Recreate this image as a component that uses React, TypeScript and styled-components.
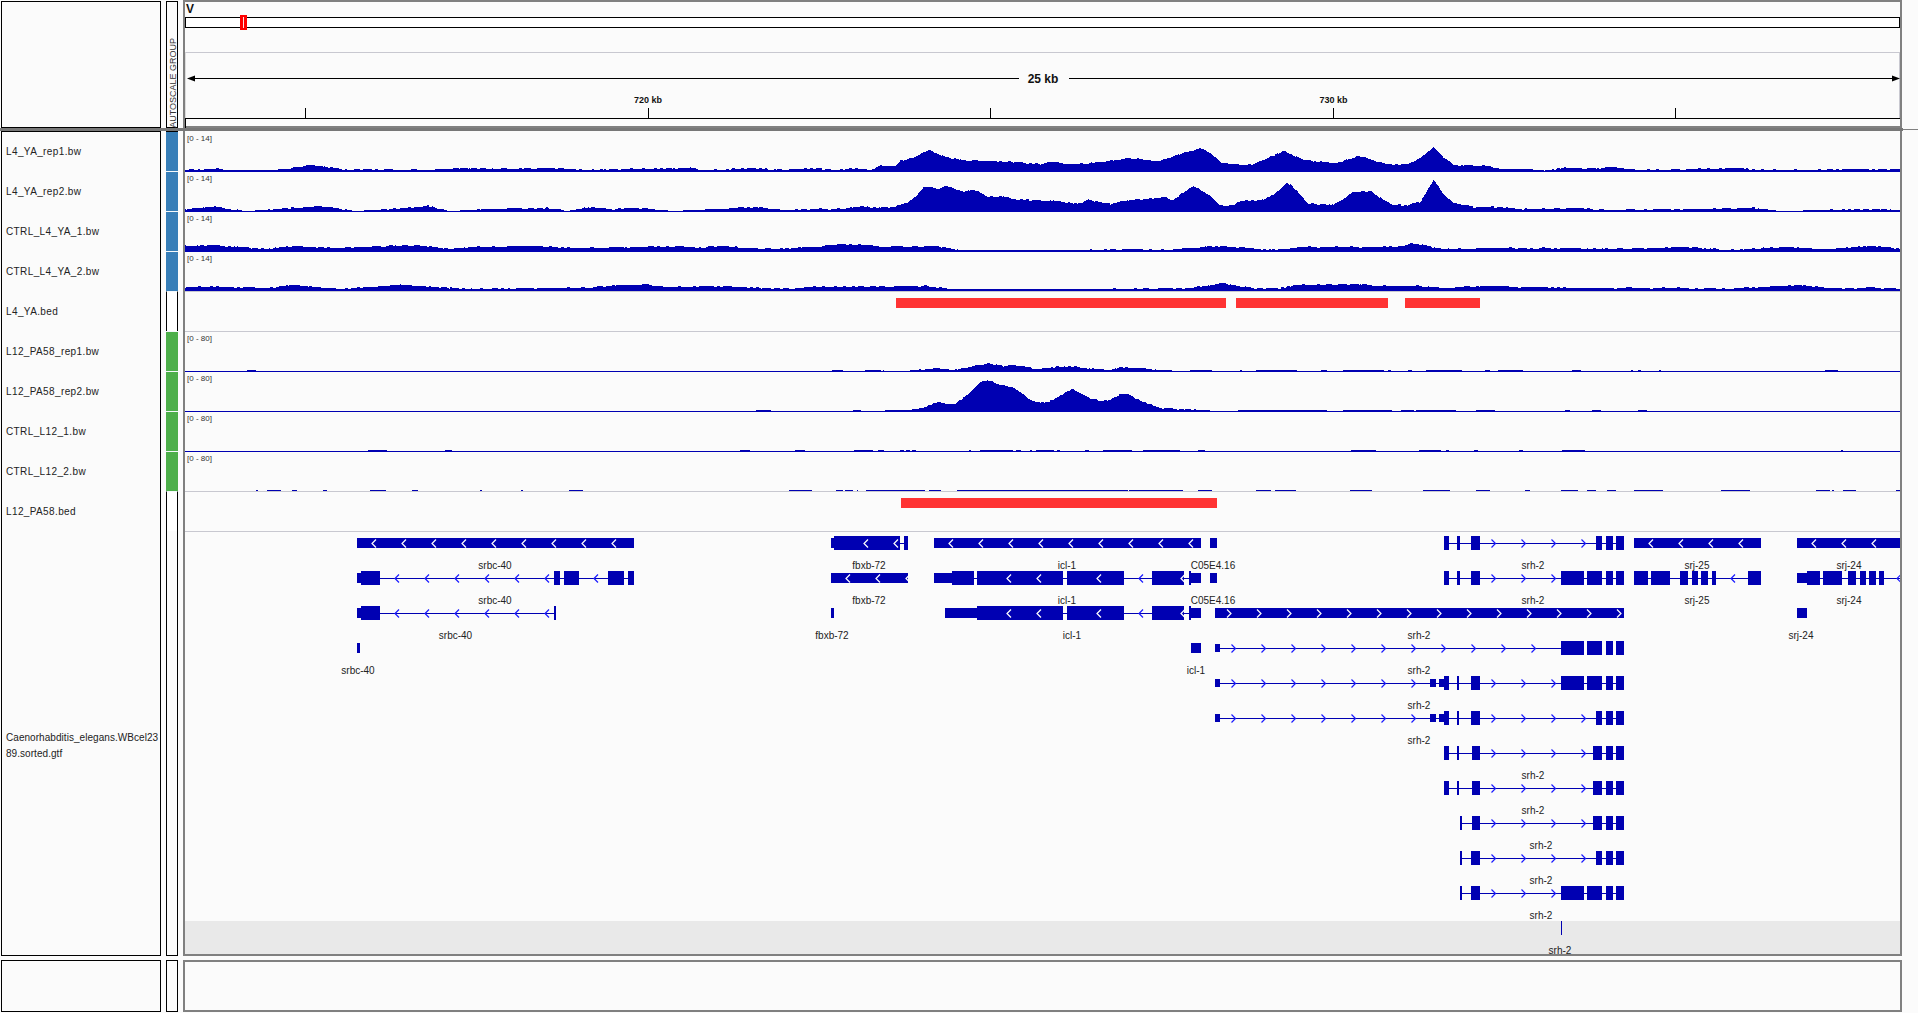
import styled, { createGlobalStyle } from "styled-components"

type Point = [number, number]
type Span = [number, number]

const BLUE = "#0000b2"
const RULE = "#c8c8d0"
const PANEL = "#fbfbfb"

// blip positions were read off crops at 2.45x, keep them in that scale
const crop = (offset: number, pairs: Span[]): Span[] =>
  pairs.map(([a, b]) => [offset + a / 2.45, offset + b / 2.45])

const noise = (x: number, seed: number) => {
  const bucket = Math.floor(x / 3)
  const v = Math.sin(bucket * 12.9898 + seed) * 43758.5453
  return v - Math.floor(v) - 0.5
}

const interpolate = (points: Point[], x: number) => {
  if (points.length === 0) return 0
  for (let i = 1; i < points.length; i++) {
    const [x0, h0] = points[i - 1]
    const [x1, h1] = points[i]
    if (x >= x0 && x <= x1) return h0 + ((h1 - h0) * (x - x0)) / (x1 - x0)
  }
  return 0
}

type TrackData = {
  name: string
  range?: string
  points?: Point[]
  floor?: number
  blips?: Span[]
  baseline?: boolean
  beds?: Span[]
  ruled?: boolean
  attr?: string
}

const coveragePath = (track: TrackData, seed: number, base: number) => {
  let d = `M185 ${base}`
  for (let x = 185; x < 1900; x++) {
    const raw = Math.max(interpolate(track.points ?? [], x), track.floor ?? 0)
    let h = raw > 2 ? Math.round(raw + noise(x, seed) * 1.3) : Math.round(raw)
    const inBlip = (track.blips ?? []).some(([a, b]) => x >= a && x < b)
    if (track.baseline) h = Math.max(h, inBlip ? 2 : 1)
    else if (inBlip) h = Math.max(h, 1)
    if (track.floor) h = Math.max(h, track.floor)
    d += `V${base - h}H${x + 1}`
  }
  return `${d}V${base}Z`
}

const TRACKS: TrackData[] = [
  {
    name: "L4_YA_rep1.bw",
    range: "[0 - 14]",
    attr: "#377eb8",
    points: [
      [184, 2], [190, 3], [200, 2], [214, 4], [228, 2], [277, 2], [312, 7], [347, 2], [367, 3], [428, 2],
      [469, 4], [510, 3], [551, 4], [584, 2], [612, 3], [640, 3], [689, 4], [709, 2], [754, 4], [783, 2],
      [811, 4], [832, 2], [856, 4], [869, 2], [880, 6], [894, 6], [900, 11], [913, 15], [929, 22], [937, 18],
      [950, 14], [963, 12], [1013, 10], [1040, 8], [1053, 10], [1073, 8], [1093, 9], [1128, 14], [1160, 11],
      [1180, 18], [1200, 24], [1210, 19], [1220, 9], [1230, 8], [1250, 7], [1263, 12], [1283, 21], [1297, 15],
      [1303, 12], [1320, 10], [1337, 9], [1357, 16], [1373, 12], [1387, 8], [1407, 8], [1420, 14], [1433, 25],
      [1443, 15], [1453, 7], [1487, 6], [1500, 3], [1551, 2], [1564, 5], [1584, 3], [1613, 5], [1637, 2],
      [1735, 4], [1760, 2], [1890, 3], [1902, 3],
    ],
  },
  {
    name: "L4_YA_rep2.bw",
    range: "[0 - 14]",
    attr: "#377eb8",
    points: [
      [184, 3], [216, 5], [245, 1], [265, 2], [318, 6], [355, 1], [388, 3], [428, 6], [449, 1], [490, 3],
      [547, 4], [567, 1], [588, 5], [612, 3], [640, 4], [673, 1], [693, 2], [754, 5], [783, 2], [820, 3],
      [844, 3], [860, 6], [880, 4], [893, 5], [907, 10], [917, 17], [923, 25], [932, 25], [938, 23], [945, 26],
      [953, 24], [963, 20], [970, 22], [978, 21], [987, 15], [1003, 16], [1017, 12], [1040, 12], [1063, 10],
      [1077, 8], [1088, 12], [1110, 8], [1123, 11], [1153, 14], [1163, 15], [1173, 12], [1183, 20], [1193, 26],
      [1208, 18], [1217, 9], [1223, 6], [1233, 7], [1240, 11], [1263, 12], [1277, 20], [1287, 30], [1297, 20],
      [1308, 8], [1327, 8], [1333, 7], [1343, 13], [1352, 20], [1370, 21], [1383, 12], [1393, 7], [1407, 7],
      [1420, 10], [1433, 32], [1443, 18], [1453, 9], [1473, 5], [1500, 5], [1523, 3], [1576, 4], [1604, 2],
      [1686, 3], [1755, 4], [1780, 1], [1870, 3], [1902, 2],
    ],
  },
  {
    name: "CTRL_L4_YA_1.bw",
    range: "[0 - 14]",
    attr: "#377eb8",
    floor: 2,
    points: [
      [184, 6], [212, 7], [265, 3], [294, 6], [335, 4], [367, 5], [416, 7], [449, 3], [469, 5], [531, 6],
      [571, 4], [640, 5], [681, 6], [701, 4], [713, 6], [775, 3], [852, 8], [885, 5], [934, 6], [958, 2],
      [1089, 2], [1130, 3], [1166, 2], [1220, 6], [1277, 2], [1302, 5], [1360, 5], [1400, 6], [1413, 9],
      [1441, 3], [1490, 4], [1564, 4], [1625, 3], [1686, 5], [1727, 2], [1784, 5], [1821, 3], [1874, 6],
      [1902, 3],
    ],
  },
  {
    name: "CTRL_L4_YA_2.bw",
    range: "[0 - 14]",
    attr: "#377eb8",
    ruled: true,
    floor: 2,
    points: [
      [184, 4], [240, 4], [265, 3], [298, 6], [339, 2], [400, 6], [449, 3], [486, 2], [531, 3], [571, 3],
      [612, 5], [640, 7], [665, 4], [722, 5], [762, 3], [791, 2], [811, 4], [926, 5], [954, 2], [1089, 2],
      [1191, 3], [1220, 8], [1252, 3], [1280, 3], [1298, 6], [1360, 7], [1380, 5], [1421, 5], [1441, 3],
      [1482, 5], [1564, 3], [1686, 3], [1727, 2], [1796, 6], [1829, 3], [1890, 3], [1902, 2],
    ],
  },
  { name: "L4_YA.bed", ruled: true, beds: [[896, 1226], [1236, 1388], [1405, 1480]] },
  {
    name: "L12_PA58_rep1.bw",
    range: "[0 - 80]",
    attr: "#4daf4a",
    baseline: true,
    points: [
      [901, 0], [902, 1], [918, 2], [938, 4], [953, 2], [973, 6], [988, 9], [1003, 6], [1013, 7], [1037, 3],
      [1067, 6], [1087, 4], [1107, 2], [1122, 5], [1147, 3], [1180, 1], [1200, 2], [1222, 1], [1223, 0],
    ],
    blips: [
      ...crop(0, [[605, 625]]),
      ...crop(640, [[470, 497], [550, 590], [594, 597], [1470, 1473], [1508, 1568]]),
      ...crop(1278, [
        [0, 46], [105, 118], [158, 258], [268, 276], [318, 328], [362, 450], [505, 517], [537, 600],
        [718, 740], [863, 868], [880, 888], [932, 937], [1340, 1370],
      ]),
    ],
  },
  {
    name: "L12_PA58_rep2.bw",
    range: "[0 - 80]",
    attr: "#4daf4a",
    baseline: true,
    points: [
      [887, 1], [910, 2], [923, 5], [938, 10], [948, 8], [955, 8], [970, 20], [980, 30], [987, 32], [997, 28],
      [1012, 25], [1020, 20], [1030, 12], [1043, 9], [1053, 12], [1072, 23], [1087, 15], [1100, 11], [1107, 11],
      [1120, 18], [1127, 18], [1140, 11], [1160, 4], [1177, 3], [1200, 2], [1218, 1], [1219, 0],
    ],
    blips: [
      ...crop(640, [[282, 320], [520, 540], [600, 660], [1465, 1568]]),
      ...crop(1278, [
        [0, 118], [157, 278], [300, 332], [338, 436], [483, 531], [703, 713], [769, 790], [882, 903],
      ]),
    ],
  },
  {
    name: "CTRL_L12_1.bw",
    range: "[0 - 80]",
    attr: "#4daf4a",
    baseline: true,
    blips: [
      ...crop(0, [[900, 948], [1088, 1106]]),
      ...crop(640, [
        [243, 268], [378, 404], [522, 570], [583, 597], [637, 646], [650, 660], [664, 674], [806, 810],
        [832, 912], [920, 932], [955, 958], [968, 1012], [1020, 1028], [1088, 1100], [1132, 1205],
        [1232, 1323], [1365, 1384],
      ]),
      ...crop(1278, [
        [178, 238], [345, 398], [410, 418], [480, 490], [590, 598], [695, 752], [1378, 1382],
      ]),
    ],
  },
  {
    name: "CTRL_L12_2.bw",
    range: "[0 - 80]",
    attr: "#4daf4a",
    ruled: true,
    blips: [
      ...crop(0, [
        [627, 632], [654, 688], [713, 727], [789, 799], [906, 945], [1007, 1022], [1176, 1180], [1276, 1280],
        [1394, 1428],
      ]),
      ...crop(640, [
        [363, 419], [480, 496], [502, 520], [530, 534], [553, 696], [708, 737], [775, 1195], [1198, 1208],
        [1210, 1330], [1365, 1400], [1508, 1544], [1555, 1568],
      ]),
      ...crop(1278, [
        [0, 44], [176, 228], [353, 420], [485, 519], [605, 617], [693, 735], [757, 779], [804, 828],
        [870, 941], [1083, 1105], [1107, 1156], [1316, 1352], [1357, 1361], [1384, 1414], [1514, 1527],
      ]),
    ],
  },
  { name: "L12_PA58.bed", ruled: true, beds: [[901, 1217]] },
]

type Gene = {
  row: number
  line?: Span
  tall?: Span[]
  mid?: Span[]
  short?: Span[]
  blue?: Point
  blueAlso?: number[]
  white?: Point
  whiteAlso?: number[]
}

const SRH_TAIL: Span[] = [[1606, 1613], [1616, 1624]]
const SRH_LONG: Span[] = [[1561, 1584], [1587, 1602], ...SRH_TAIL]
const SRH_SHORT: Span[] = [[1596, 1602], ...SRH_TAIL]
const SRH_MIDDLE: Span[] = [[1593, 1602], ...SRH_TAIL]
const ICL_EXONS: Span[] = [[977, 1063], [1067, 1124], [1152, 1184], [1189, 1191]]

const GENES: Gene[] = [
  { row: 0, short: [[357, 634]], white: [374, 9] },
  {
    row: 1,
    line: [357, 634],
    short: [[357, 361]],
    tall: [[361, 380], [554, 560], [564, 579], [608, 624], [628, 634]],
    blue: [397, 6],
    blueAlso: [596],
  },
  { row: 2, line: [357, 555], short: [[357, 361]], tall: [[361, 380], [554, 556]], blue: [397, 6] },
  { row: 3, short: [[357, 360]] },

  { row: 0, line: [900, 905], short: [[831, 834]], tall: [[834, 900], [904, 908]], white: [866, 2] },
  { row: 1, short: [[831, 908]], white: [848, 3] },
  { row: 2, short: [[831, 834]] },

  { row: 0, short: [[934, 1201], [1210, 1217]], white: [951, 9] },
  {
    row: 1,
    line: [934, 1201],
    short: [[934, 952], [1191, 1201], [1210, 1217]],
    tall: [[952, 974], ...ICL_EXONS],
    white: [1009, 2],
    whiteAlso: [1099, 1183],
    blue: [1141, 1],
  },
  {
    row: 2,
    line: [945, 1201],
    short: [[945, 977], [1191, 1201]],
    tall: ICL_EXONS,
    white: [1009, 2],
    whiteAlso: [1099, 1183],
    blue: [1141, 1],
  },
  { row: 3, short: [[1191, 1201]] },

  { row: 0, line: [1444, 1624], tall: [[1444, 1449], [1457, 1460], [1471, 1480], [1596, 1602], ...SRH_TAIL], blue: [1493.5, 4] },
  { row: 1, line: [1444, 1624], tall: [[1444, 1449], [1457, 1460], [1471, 1480], ...SRH_LONG], blue: [1493.5, 3] },
  { row: 2, short: [[1215, 1624]], white: [1229, 14] },
  { row: 3, line: [1215, 1561], mid: [[1215, 1220]], tall: SRH_LONG, blue: [1233.5, 11] },
  {
    row: 4,
    line: [1215, 1624],
    mid: [[1215, 1220], [1430, 1436], [1439, 1444]],
    tall: [[1444, 1449], [1457, 1459], [1471, 1480], ...SRH_LONG],
    blue: [1233.5, 7],
    blueAlso: [1493.5, 1523.5, 1553.5],
  },
  {
    row: 5,
    line: [1215, 1624],
    mid: [[1215, 1220], [1430, 1436], [1439, 1444]],
    tall: [[1444, 1449], [1457, 1459], [1471, 1480], ...SRH_SHORT],
    blue: [1233.5, 7],
    blueAlso: [1493.5, 1523.5, 1553.5, 1583.5],
  },
  { row: 6, line: [1444, 1624], tall: [[1444, 1449], [1457, 1459], [1472, 1480], ...SRH_MIDDLE], blue: [1493.5, 4] },
  { row: 7, line: [1444, 1624], tall: [[1444, 1449], [1457, 1459], [1472, 1480], ...SRH_MIDDLE], blue: [1493.5, 4] },
  { row: 8, line: [1460, 1624], tall: [[1460, 1462], [1472, 1480], ...SRH_MIDDLE], blue: [1493.5, 4] },
  { row: 9, line: [1460, 1624], tall: [[1460, 1462], [1471, 1480], ...SRH_SHORT], blue: [1493.5, 4] },
  { row: 10, line: [1460, 1624], tall: [[1460, 1462], [1471, 1480], ...SRH_LONG], blue: [1493.5, 3] },
  { row: 11, tall: [[1561, 1562]] },

  { row: 0, short: [[1634, 1761]], white: [1651, 4] },
  {
    row: 1,
    line: [1634, 1761],
    tall: [[1634, 1648], [1651, 1670], [1680, 1688], [1692, 1698], [1701, 1708], [1712, 1716], [1748, 1761]],
    blue: [1733, 1],
  },
  { row: 0, short: [[1797, 1900]], white: [1814, 3] },
  {
    row: 1,
    line: [1797, 1900],
    short: [[1797, 1807]],
    tall: [[1807, 1820], [1823, 1842], [1848, 1856], [1860, 1866], [1869, 1876], [1879, 1884]],
    blue: [1899, 1],
  },
  { row: 2, short: [[1797, 1807]] },
]

const GENE_LABELS: [number, number, string][] = [
  [0, 495, "srbc-40"], [1, 495, "srbc-40"], [2, 455.5, "srbc-40"], [3, 358, "srbc-40"],
  [0, 869, "fbxb-72"], [1, 869, "fbxb-72"], [2, 832, "fbxb-72"],
  [0, 1067, "icl-1"], [1, 1067, "icl-1"], [2, 1072, "icl-1"], [3, 1196, "icl-1"],
  [0, 1213, "C05E4.16"], [1, 1213, "C05E4.16"],
  [0, 1533, "srh-2"], [1, 1533, "srh-2"], [2, 1419, "srh-2"], [3, 1419, "srh-2"], [4, 1419, "srh-2"],
  [5, 1419, "srh-2"], [6, 1533, "srh-2"], [7, 1533, "srh-2"], [8, 1541, "srh-2"], [9, 1541, "srh-2"],
  [10, 1541, "srh-2"], [11, 1560, "srh-2"],
  [0, 1697, "srj-25"], [1, 1697, "srj-25"],
  [0, 1849, "srj-24"], [1, 1849, "srj-24"], [2, 1801, "srj-24"],
]

const rowY = (row: number) => 543 + row * 35

const chevrons = (first: Point | undefined, also: number[] = []) => {
  const xs = [...also]
  if (first) for (let i = 0; i < first[1]; i++) xs.push(first[0] + i * 30)
  return xs
}

const Chevron = ({ x, y, reverse, color }: { x: number; y: number; reverse: boolean; color: string }) => (
  <polyline
    points={
      reverse
        ? `${x + 2},${y - 3.5} ${x - 2},${y + 0.5} ${x + 2},${y + 4.5}`
        : `${x - 2},${y - 3.5} ${x + 2},${y + 0.5} ${x - 2},${y + 4.5}`
    }
    fill="none"
    stroke={color}
    strokeWidth={1.2}
  />
)

const GeneModel = ({ gene }: { gene: Gene }) => {
  const y = rowY(gene.row)
  // srh-2 transcripts are the forward ones, everything either side runs back
  const firstX = gene.line?.[0] ?? gene.short?.[0][0] ?? 0
  const reverse = firstX < 1215 || firstX > 1630
  const bar = (span: Span, half: number, key: string) => (
    <rect key={key} x={span[0]} y={y - half} width={span[1] - span[0]} height={half * 2} fill={BLUE} shapeRendering="crispEdges" />
  )
  return (
    <g>
      {gene.line && (
        <rect x={gene.line[0]} y={y} width={gene.line[1] - gene.line[0]} height={1} fill={BLUE} shapeRendering="crispEdges" />
      )}
      {chevrons(gene.blue, gene.blueAlso).map((x) => (
        <Chevron key={`b${x}`} x={x} y={y} reverse={reverse} color="#1a1aff" />
      ))}
      {gene.short?.map((s, i) => bar(s, 5, `s${i}`))}
      {gene.mid?.map((s, i) => bar(s, 4, `m${i}`))}
      {gene.tall?.map((s, i) => bar(s, 7, `t${i}`))}
      {chevrons(gene.white, gene.whiteAlso).map((x) => (
        <Chevron key={`w${x}`} x={x} y={y} reverse={reverse} color="#ffffff" />
      ))}
    </g>
  )
}

const Track = ({ track, index }: { track: TrackData; index: number }) => {
  const base = track.ruled ? 40 : 41
  return (
    <TrackRow $ruled={track.ruled}>
      {track.range && <RangeLabel>{track.range}</RangeLabel>}
      <TrackChart viewBox="185 0 1715 41" width={1715} height={41}>
        {track.beds
          ? track.beds.map(([a, b]) => (
              <rect key={a} x={a} y={7} width={b - a} height={10} fill="#ff3333" shapeRendering="crispEdges" />
            ))
          : <path d={coveragePath(track, index + 1, base)} fill={BLUE} shapeRendering="crispEdges" />}
      </TrackChart>
    </TrackRow>
  )
}

const TICKS = [304, 646.5, 989, 1332, 1674]

const Ruler = () => (
  <RulerChart viewBox="185 53 1714 65" width={1714} height={65}>
    <polygon points="186,78.5 194,75.5 194,81.5" fill="#000" />
    <polygon points="1899,78.5 1891,75.5 1891,81.5" fill="#000" />
    <rect x={190} y={78} width={828} height={1} fill="#000" />
    <rect x={1068} y={78} width={826} height={1} fill="#000" />
    <SpanLabel x={1042} y={83} textAnchor="middle">25 kb</SpanLabel>
    <TickLabel x={647} y={103} textAnchor="middle">720 kb</TickLabel>
    <TickLabel x={1332.5} y={103} textAnchor="middle">730 kb</TickLabel>
    {TICKS.map((x) => (
      <rect key={x} x={x} y={108} width={1} height={10} fill="#000" shapeRendering="crispEdges" />
    ))}
  </RulerChart>
)

const App = () => {
  return (
    <Page>
      <GlobalStyle />
      <PanelRow $height={128}>
        <NamePanel $top={1} />
        <AttrPanel $top={1}>
          <AutoscaleLabel>AUTOSCALE GROUP</AutoscaleLabel>
        </AttrPanel>
        <DataPanel $capped>
          <ChromName>V</ChromName>
          <ChromBar>
            <ChromMarker />
          </ChromBar>
          <RulerBox>
            <Ruler />
          </RulerBox>
          <RulerBase />
        </DataPanel>
      </PanelRow>

      <Divider>
        <DividerBar />
        <DividerTail />
      </Divider>

      <PanelRow $height={825}>
        <NamePanel>
          {TRACKS.map((track) => (
            <NameRow key={track.name}>{track.name}</NameRow>
          ))}
          <GeneName>
            <GeneNameLine>Caenorhabditis_elegans.WBcel23</GeneNameLine>
            <GeneNameLine>89.sorted.gtf</GeneNameLine>
          </GeneName>
        </NamePanel>
        <AttrPanel>
          {TRACKS.map((track) => (
            <AttrCell key={track.name} $color={track.attr} />
          ))}
        </AttrPanel>
        <DataPanel>
          {TRACKS.map((track, i) => (
            <Track key={track.name} track={track} index={i} />
          ))}
          <GeneTrack>
            <GeneChart viewBox="185 531 1715 423" width={1715} height={423}>
              {GENES.map((gene, i) => (
                <GeneModel key={i} gene={gene} />
              ))}
              {GENE_LABELS.map(([row, x, label], i) => (
                <GeneLabel key={i} x={x} y={rowY(row) + 25.5} textAnchor="middle">
                  {label}
                </GeneLabel>
              ))}
            </GeneChart>
          </GeneTrack>
        </DataPanel>
      </PanelRow>

      <PanelRow $height={52} $gap={4}>
        <NamePanel />
        <AttrPanel />
        <DataPanel $capped />
      </PanelRow>
    </Page>
  )
}

const GlobalStyle = createGlobalStyle`
  html, body {
    margin: 0;
    padding: 0;
    background: ${PANEL};
    overflow: hidden;
  }
`

const Page = styled.div`
  display: flex;
  flex-direction: column;
  width: 1918px;
  height: 1013px;
  padding-left: 1px;
  box-sizing: border-box;
  font-family: "Liberation Sans", Arial, sans-serif;
  color: #222;
`

const PanelRow = styled.div<{ $height: number; $gap?: number }>`
  display: grid;
  grid-template-columns: 160px 12px 1719px;
  column-gap: 5px;
  height: ${(p) => p.$height}px;
  margin-top: ${(p) => p.$gap ?? 0}px;
`

const NamePanel = styled.div<{ $top?: number }>`
  display: flex;
  flex-direction: column;
  min-height: 0;
  margin-top: ${(p) => p.$top ?? 0}px;
  box-shadow: inset 0 0 0 1px #000;
  overflow: hidden;
`

const NameRow = styled.div`
  display: flex;
  align-items: center;
  flex: none;
  height: 40px;
  padding-left: 5px;
  font-size: 10px;
  letter-spacing: 0.38px;
  white-space: nowrap;
`

const GeneName = styled.div`
  display: flex;
  flex: 1;
  flex-direction: column;
  justify-content: center;
  padding: 4px 0 0 5px;
  margin-right: 1px;
  overflow: hidden;
`

const GeneNameLine = styled.div`
  height: 16px;
  font-size: 10px;
  line-height: 16px;
  letter-spacing: 0.05px;
  white-space: nowrap;
`

const AttrPanel = styled.div<{ $top?: number }>`
  position: relative;
  display: flex;
  flex-direction: column;
  margin-top: ${(p) => p.$top ?? 0}px;
  box-shadow: inset 0 0 0 1px #000;
`

const AttrCell = styled.div<{ $color?: string }>`
  flex: none;
  height: 40px;
  box-sizing: border-box;
  background: ${(p) => p.$color ?? "#fff"};
  border-top: 1px solid #f4f8fb;
  border-left: ${(p) => (p.$color ? "none" : "1px solid #000")};
  border-right: ${(p) => (p.$color ? "none" : "1px solid #000")};

  &:first-child {
    border-top-color: #000;
  }
`

const AutoscaleLabel = styled.div`
  align-self: flex-end;
  margin-top: auto;
  padding-bottom: 1px;
  font-size: 9px;
  line-height: 10px;
  color: #333;
  writing-mode: vertical-rl;
  transform: rotate(180deg);
  white-space: nowrap;
`

const DataPanel = styled.div<{ $capped?: boolean }>`
  display: flex;
  flex-direction: column;
  min-height: 0;
  box-sizing: border-box;
  border: 0 solid #808080;
  border-width: ${(p) => (p.$capped ? "2px 2px 2px 2px" : "0 2px 2px 2px")};
`

const ChromName = styled.div`
  height: 15px;
  padding-left: 1px;
  font-size: 12px;
  font-weight: 700;
  line-height: 15px;
  color: #111;
`

const ChromBar = styled.div`
  position: relative;
  flex: none;
  height: 11px;
  box-sizing: border-box;
  background: #fff;
  border: 1px solid #000;
`

const ChromMarker = styled.div`
  position: absolute;
  left: 54px;
  top: -3px;
  width: 7px;
  height: 15px;
  box-sizing: border-box;
  background: #fbe0e0;
  border: 3px solid #ff0000;
  border-width: 2px 3px;
`

const RulerBox = styled.div`
  flex: none;
  height: 66px;
  margin-top: 24px;
  box-sizing: border-box;
  border: 1px solid ${RULE};
  border-bottom: none;
  border-left-color: #ddd;
`

const RulerChart = styled.svg`
  display: block;
`

const RulerBase = styled.div`
  flex: none;
  height: 9px;
  border-top: 1px solid #000;
  border-left: 1px solid #000;
`

const SpanLabel = styled.text`
  font-size: 12px;
  font-weight: 700;
  fill: #111;
`

const TickLabel = styled.text`
  font-size: 9px;
  font-weight: 700;
  fill: #111;
`

const Divider = styled.div`
  display: flex;
  align-items: center;
  flex: none;
  height: 3px;
  margin-left: -1px;
`

const DividerBar = styled.div`
  width: 1903px;
  height: 3px;
  background: #777;
`

const DividerTail = styled.div`
  flex: 1;
  height: 1px;
  background: #808080;
`

const TrackRow = styled.div<{ $ruled?: boolean }>`
  position: relative;
  flex: none;
  height: 40px;
  box-shadow: ${(p) => (p.$ruled ? `0 1px 0 ${RULE}` : "none")};
`

const RangeLabel = styled.span`
  position: absolute;
  left: 2px;
  top: 3px;
  font-size: 8px;
  line-height: 9px;
  color: #333;
`

const TrackChart = styled.svg`
  display: block;
  overflow: visible;
`

const GeneTrack = styled.div`
  flex: 1;
  background: linear-gradient(to bottom, transparent 390px, #e9e9e9 390px);
`

const GeneChart = styled.svg`
  display: block;
`

const GeneLabel = styled.text`
  font-size: 10px;
  fill: #222;
`

export default App
